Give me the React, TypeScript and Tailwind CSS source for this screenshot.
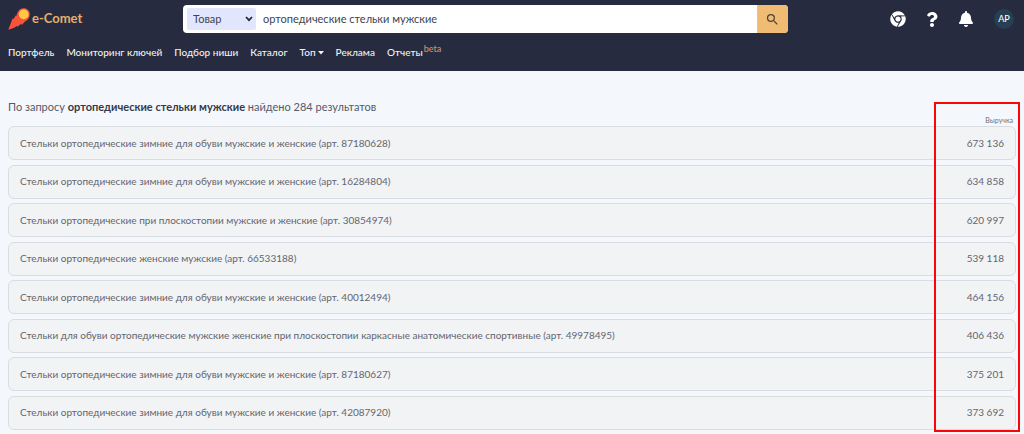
import { FaBell, FaChrome, FaQuestion } from 'react-icons/fa';
import { MdSearch } from 'react-icons/md';

interface Product {
  name: string;
  article: string;
  revenue: string;
}

const query = 'ортопедические стельки мужские';

const products: Product[] = [
  {
    name: 'Стельки ортопедические зимние для обуви мужские и женские',
    article: '87180628',
    revenue: '673 136',
  },
  {
    name: 'Стельки ортопедические зимние для обуви мужские и женские',
    article: '16284804',
    revenue: '634 858',
  },
  {
    name: 'Стельки ортопедические при плоскостопии мужские и женские',
    article: '30854974',
    revenue: '620 997',
  },
  {
    name: 'Стельки ортопедические женские мужские',
    article: '66533188',
    revenue: '539 118',
  },
  {
    name: 'Стельки ортопедические зимние для обуви мужские и женские',
    article: '40012494',
    revenue: '464 156',
  },
  {
    name: 'Стельки для обуви ортопедические мужские женские при плоскостопии каркасные анатомические спортивные',
    article: '49978495',
    revenue: '406 436',
  },
  {
    name: 'Стельки ортопедические зимние для обуви мужские и женские',
    article: '87180627',
    revenue: '375 201',
  },
  {
    name: 'Стельки ортопедические зимние для обуви мужские и женские',
    article: '42087920',
    revenue: '373 692',
  },
];

function Logo() {
  return (
    <a href="#" className="flex w-[175px] shrink-0 items-center gap-[2px]">
      <svg viewBox="0 0 22 22" className="h-[22px] w-[22px]" aria-hidden="true">
        <path
          d="M.3 21.7 4.6 10.4l.9.7 2.2-3.6.9.2C9.4 3.4 12 .3 15.6.3c3.6 0 6.2 2.7 6.2 6.1 0 3.4-2.2 5.6-5.2 7.4l-2.9 3.4-.2-1.7-4.3 3.4.1-1.2-3.7 2.4Z"
          fill="#fb5339"
        />
        <circle cx="15.7" cy="6.4" r="4.9" fill="#fdc944" />
      </svg>
      <span className="text-[13px] font-bold text-[#e3ae6e]">e-Comet</span>
    </a>
  );
}

function SearchForm() {
  return (
    <form
      className="flex h-7 w-[60%] overflow-hidden rounded-sm bg-white"
      onSubmit={(e) => e.preventDefault()}
    >
      <div className="relative my-[3px] ml-1 flex w-[69px] shrink-0">
        <select
          aria-label="Где искать"
          className="w-full appearance-none rounded-xs bg-[#e1e6fc] pl-[6px] text-[11px] leading-4 text-[#40444f]"
        >
          <option>Товар</option>
        </select>
        <svg
          viewBox="0 0 8 6"
          className="pointer-events-none absolute top-2 right-[3px] h-[6px] w-2"
          aria-hidden="true"
        >
          <path d="m1 1 3 3.2L7 1" fill="none" stroke="#22252f" strokeWidth="1.7" />
        </svg>
      </div>
      <input
        type="text"
        aria-label="Запрос"
        defaultValue={query}
        className="min-w-0 flex-1 px-[7px] text-[11px] text-[#40444f] outline-none"
      />
      <button
        type="submit"
        aria-label="Найти"
        className="flex w-[31px] items-center justify-center border-l border-[#d8c4a8] bg-[#f0bc74] text-[#4c4540]"
      >
        <MdSearch className="h-[15px] w-[15px]" />
      </button>
    </form>
  );
}

function Header() {
  return (
    <header className="bg-[#272b3f] px-2 pt-[5px]">
      <div className="flex items-center">
        <Logo />
        <SearchForm />
        <div className="ml-auto flex items-center text-white">
          <a href="#" aria-label="Расширение для Chrome" className="mr-5">
            <FaChrome className="h-4 w-4" />
          </a>
          <a href="#" aria-label="Помощь" className="mr-[21px]">
            <FaQuestion className="h-[15px] w-3" />
          </a>
          <a href="#" aria-label="Уведомления" className="mr-[21px]">
            <FaBell className="h-4 w-[14px]" />
          </a>
          <button
            type="button"
            className="mr-[2px] flex h-5 w-5 items-center justify-center rounded-full bg-[#263f53] text-[9px] font-medium"
          >
            AP
          </button>
        </div>
      </div>
      <nav className="flex h-[38px] items-center gap-3 pt-px text-[10px] font-medium text-[#f0f1f4]">
        <a href="#">Портфель</a>
        <a href="#">Мониторинг ключей</a>
        <a href="#">Подбор ниши</a>
        <a href="#">Каталог</a>
        <button type="button" className="flex items-center gap-[2px]">
          Топ
          <svg viewBox="0 0 6 4" className="h-1 w-[6px]" aria-hidden="true">
            <path d="M0 0h6L3 3.4Z" fill="currentColor" />
          </svg>
        </button>
        <a href="#">Реклама</a>
        <a href="#">
          Отчеты
          <sup className="ml-px text-[9px] leading-none text-[#d0955f]">beta</sup>
        </a>
      </nav>
    </header>
  );
}

export default function App() {
  return (
    <div className="flex min-h-screen flex-col bg-[#f4f7fb] font-['Lato',sans-serif]">
      <Header />
      <main className="relative flex flex-1 flex-col px-2 pt-7 pb-1">
        <h1 className="text-[11px] leading-4 text-[#555a66]">
          По запросу <b className="font-bold text-[#343947]">{query}</b> найдено 284 результатов
        </h1>
        <div className="mr-[3px] text-right text-[7px] leading-[11px] text-[#6d717c]">Выручка</div>
        <ul className="flex flex-1 flex-col justify-between gap-1">
          {products.map((product) => (
            <li
              key={product.article}
              className="flex h-[34px] items-center justify-between rounded-md border border-[#d9dce0] bg-[#f2f3f5] px-[11px] text-[10px] text-[#62666f]"
            >
              <span>
                {product.name} (арт. {product.article})
              </span>
              <span>{product.revenue}</span>
            </li>
          ))}
        </ul>
        <div className="pointer-events-none absolute top-[31px] right-1 bottom-[2px] w-[86px] border-2 border-[#fb0509]" />
      </main>
    </div>
  );
}
